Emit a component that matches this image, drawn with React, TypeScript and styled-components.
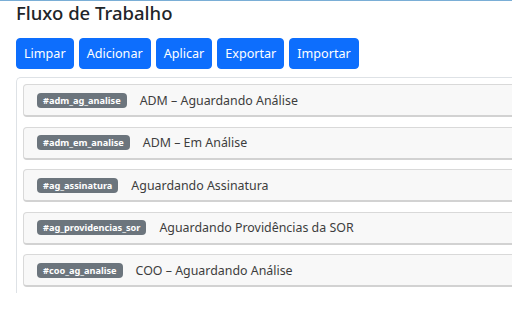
import React from 'react';
import styled, { createGlobalStyle } from 'styled-components';

const GlobalStyle = createGlobalStyle`
  html, body {
    margin: 0;
    padding: 0;
    background: #fff;
    overflow: hidden;
  }
  body {
    font-family: 'Noto Sans', 'Open Sans', sans-serif;
    color: #212529;
  }
`;

const Page = styled.div`
  width: 512px;
  height: 320px;
  border-top: 1px solid #7aaed6;
  box-sizing: border-box;
  padding: 0 0 0 16px;
  overflow: hidden;
`;

const Title = styled.h1`
  margin: 0;
  font-size: 18.5px;
  font-weight: 500;
  line-height: 24px;
  color: #212529;
`;

const Toolbar = styled.div`
  display: flex;
  gap: 5px;
  margin-top: 13px;
`;

const Button = styled.button`
  height: 31px;
  padding: 0 7px;
  border: 1px solid #0d6efd;
  border-radius: 4px;
  background: #0d6efd;
  color: #fff;
  font-family: 'Noto Sans', 'Open Sans', sans-serif;
  font-size: 12.6px;
  cursor: pointer;
`;

const ListBox = styled.div`
  width: 560px;
  margin-top: 8px;
  padding: 6px 0 6px 6px;
  border-top: 1px solid #dee2e6;
  border-left: 1px solid #dee2e6;
  border-top-left-radius: 5px;
  display: flex;
  flex-direction: column;
  gap: 9.5px;
`;

const Item = styled.div`
  box-sizing: border-box;
  height: 33px;
  display: flex;
  align-items: center;
  gap: 13px;
  padding-left: 13px;
  background: #f8f8f8;
  border: 1px solid #d9d9d9;
  border-bottom: 2px solid #d2d2d2;
  border-radius: 4px;
`;

const Badge = styled.span`
  display: inline-block;
  padding: 2px 6px;
  border-radius: 4px;
  background: #6c757d;
  color: #fff;
  font-size: 9.2px;
  font-weight: 700;
  line-height: 11px;
`;

const Label = styled.span`
  font-size: 12.4px;
  color: #3d3d3d;
`;

const buttons = ['Limpar', 'Adicionar', 'Aplicar', 'Exportar', 'Importar'];

const items = [
  { tag: '#adm_ag_analise', label: 'ADM – Aguardando Análise' },
  { tag: '#adm_em_analise', label: 'ADM – Em Análise' },
  { tag: '#ag_assinatura', label: 'Aguardando Assinatura' },
  { tag: '#ag_providencias_sor', label: 'Aguardando Providências da SOR' },
  { tag: '#coo_ag_analise', label: 'COO – Aguardando Análise' },
];

const App = () => (
  <>
    <GlobalStyle />
    <Page>
      <Title>Fluxo de Trabalho</Title>
      <Toolbar>
        {buttons.map((b) => (
          <Button key={b} type="button">
            {b}
          </Button>
        ))}
      </Toolbar>
      <ListBox>
        {items.map((it) => (
          <Item key={it.tag}>
            <Badge>{it.tag}</Badge>
            <Label>{it.label}</Label>
          </Item>
        ))}
      </ListBox>
    </Page>
  </>
);

export default App;
